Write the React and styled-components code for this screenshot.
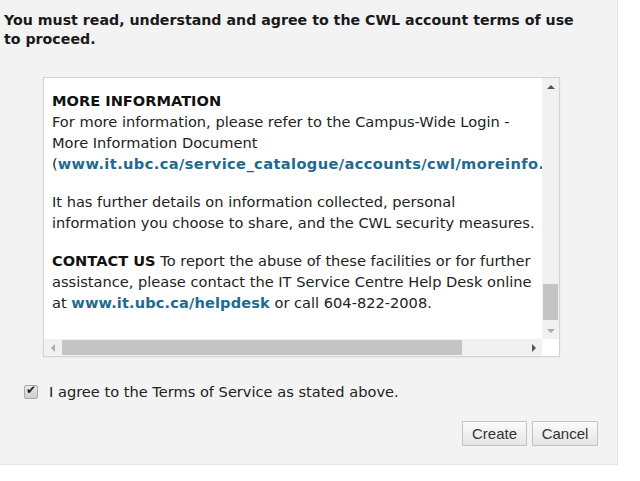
import React from "react";
import styled, { createGlobalStyle } from "styled-components";

const GlobalStyle = createGlobalStyle`
  html, body {
    margin: 0;
    padding: 0;
    background: #ffffff;
  }
  body {
    font-family: Verdana, "DejaVu Sans", sans-serif;
    color: #222;
  }
`;

const Panel = styled.div`
  width: 618px;
  height: 465px;
  box-sizing: border-box;
  padding: 11px 19px 0 4px;
  background: #f3f3f3;
  border-right: 1px solid #e4e4e4;
  border-bottom: 1px solid #e4e4e4;
`;

const Heading = styled.h2`
  margin: 0;
  font-size: 14.2px;
  line-height: 19px;
  font-weight: bold;
  color: #1a1a1a;
  white-space: nowrap;
`;

const ScrollBox = styled.div`
  margin: 28px 0 0 39px;
  width: 517px;
  height: 280px;
  box-sizing: border-box;
  border: 1px solid #d3d3d3;
  background: #fff;
  display: grid;
  grid-template-columns: 1fr 17px;
  grid-template-rows: 1fr 17px;
  box-shadow: 0 1px 2px rgba(0, 0, 0, 0.05);
`;

const Viewport = styled.div`
  overflow: hidden;
  padding: 12px 0 0 8px;
  font-size: 14.6px;
  line-height: 21px;
  color: #222;
`;

const Para = styled.p`
  margin: 0 0 17px;
  white-space: nowrap;
`;

const Strong = styled.strong`
  color: #111;
`;

const Link = styled.a`
  color: #1f6a90;
  font-weight: bold;
  letter-spacing: ${(p) => p.spacing || 0}px;
  text-decoration: none;
`;

const VBar = styled.div`
  display: flex;
  flex-direction: column;
  background: #f1f1f1;
`;

const HBar = styled.div`
  display: flex;
  background: #f1f1f1;
`;

const Corner = styled.div`
  background: #fff;
`;

const Arrow = styled.div`
  flex: 0 0 17px;
  height: 17px;
  display: flex;
  align-items: center;
  justify-content: center;
  &::after {
    content: "";
    width: 0;
    height: 0;
    border: 4px solid transparent;
    ${(p) => p.dir === "up" && "border-bottom: 4px solid #555; border-top-width: 0;"}
    ${(p) => p.dir === "down" && "border-top: 4px solid #aaa; border-bottom-width: 0;"}
    ${(p) => p.dir === "left" && "border-right: 4px solid #aaa; border-left-width: 0;"}
    ${(p) => p.dir === "right" && "border-left: 4px solid #555; border-right-width: 0;"}
  }
`;

const Track = styled.div`
  flex: 1;
  display: flex;
  flex-direction: ${(p) => (p.vertical ? "column" : "row")};
`;

const Thumb = styled.div`
  background: #c4c4c4;
  ${(p) =>
    p.vertical
      ? `margin: 189px 1px 0; height: 36px;`
      : `margin: 1px 0 1px 1px; width: 400px;`}
`;

const AgreeRow = styled.label`
  display: flex;
  align-items: center;
  margin: 25px 0 0 20px;
  font-size: 14.6px;
  line-height: 20px;
  color: #222;
`;

const Check = styled.input`
  appearance: none;
  margin: 0 11px 0 0;
  width: 14px;
  height: 14px;
  border: 1px solid #a9a9a9;
  border-radius: 2px;
  background: linear-gradient(#e8e8e8, #cfcfcf);
  position: relative;
  &:checked::after {
    content: "✔";
    position: absolute;
    left: 1px;
    top: -3px;
    font-size: 12px;
    color: #222;
  }
`;

const Actions = styled.div`
  display: flex;
  justify-content: flex-end;
  gap: 5px;
  margin-top: 19px;
`;

const Button = styled.button`
  height: 25px;
  width: ${(p) => p.w}px;
  padding: 0;
  font-family: "Liberation Sans", Arial, sans-serif;
  font-size: 15px;
  color: #333;
  border: 1px solid #c2c2c2;
  border-radius: 1px;
  background: linear-gradient(#fbfbfb, #e5e5e5);
`;

export default function App() {
  return (
    <>
      <GlobalStyle />
      <Panel>
        <Heading>
          You must read, understand and agree to the CWL account terms of use
          <br />
          to proceed.
        </Heading>

        <ScrollBox>
          <Viewport>
            <Para>
              <Strong>MORE INFORMATION</Strong>
              <br />
              For more information, please refer to the Campus-Wide Login -
              <br />
              More Information Document
              <br />(
              <Link href="#" spacing={0.4}>
                www.it.ubc.ca/service_catalogue/accounts/cwl/moreinfo.html
              </Link>
              ).
            </Para>
            <Para>
              It has further details on information collected, personal
              <br />
              information you choose to share, and the CWL security measures.
            </Para>
            <Para>
              <Strong>CONTACT US</Strong> To report the abuse of these
              facilities or for further
              <br />
              assistance, please contact the IT Service Centre Help Desk online
              <br />
              at{" "}
              <Link href="#" spacing={0.12}>
                www.it.ubc.ca/helpdesk
              </Link>{" "}
              or call 604-822-2008.
            </Para>
          </Viewport>
          <VBar>
            <Arrow dir="up" />
            <Track vertical>
              <Thumb vertical />
            </Track>
            <Arrow dir="down" />
          </VBar>
          <HBar>
            <Arrow dir="left" />
            <Track>
              <Thumb />
            </Track>
            <Arrow dir="right" />
          </HBar>
          <Corner />
        </ScrollBox>

        <AgreeRow>
          <Check type="checkbox" defaultChecked />
          I agree to the Terms of Service as stated above.
        </AgreeRow>

        <Actions>
          <Button w={65}>Create</Button>
          <Button w={66}>Cancel</Button>
        </Actions>
      </Panel>
    </>
  );
}
